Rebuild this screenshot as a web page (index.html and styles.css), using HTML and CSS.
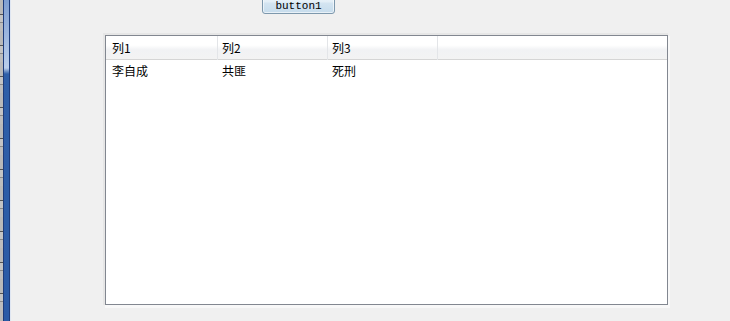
FILE: index.html
```html
<!DOCTYPE html>
<html lang="zh-CN">
<head>
    <meta charset="UTF-8">
    <title>Form1</title>
    <link rel="stylesheet" href="styles.css">
</head>
<body>
    <div class="page">
        <div class="strip">
            <div class="strip-edge"></div>
            <div class="strip-dark"></div>
            <div class="strip-bar"></div>
            <div class="strip-dark"></div>
            <div class="strip-light"></div>
        </div>
        <div class="content">
            <button class="btn">button1</button>
            <div class="listview">
                <div class="lv-header">
                    <div class="lv-col c1">列1</div>
                    <div class="lv-col c2">列2</div>
                    <div class="lv-col c3">列3</div>
                    <div class="lv-col filler"></div>
                </div>
                <div class="lv-row">
                    <div class="lv-cell c1">李自成</div>
                    <div class="lv-cell c2">共匪</div>
                    <div class="lv-cell c3">死刑</div>
                    <div class="lv-cell filler"></div>
                </div>
            </div>
        </div>
    </div>
</body>
</html>
```

FILE: styles.css
```css
body {
    margin: 0;
    background-color: #f0f0f0;
    font-family: "Noto Sans CJK SC", "Noto Sans", sans-serif;
    font-size: 12px;
    color: #000;
}
.page {
    display: flex;
    height: 321px;
    overflow: hidden;
}
.strip {
    display: flex;
    width: 12px;
    flex-shrink: 0;
}
.strip-edge {
    width: 3px;
    background: repeating-linear-gradient(to bottom, #b9b9b9 0 14px, #555 14px 15px, #c4c4c4 15px 22px, #8a8a8a 22px 23px, #bdbdbd 23px 31px);
}
.strip-dark {
    width: 1px;
    background-color: #1d3c7c;
}
.strip-bar {
    width: 5px;
    background: linear-gradient(to bottom, #7f9fd2 0, #b9cdea 68px, #2f5fa8 74px, #2a5aa6 100%);
}
.strip-light {
    width: 1px;
    background-color: #dfe6f2;
}
.content {
    display: flex;
    flex-direction: column;
    align-items: flex-start;
}
.btn {
    margin-top: -9px;
    margin-left: 250px;
    width: 73px;
    height: 23px;
    padding: 7px 0 0;
    border: 1px solid #7d98ad;
    border-radius: 3px;
    background: linear-gradient(to bottom, #f2f8fc 0, #e4eff7 45%, #d3e4f1 55%, #c6dcec 100%);
    box-shadow: inset 0 0 0 1px rgba(255, 255, 255, 0.6);
    font-family: "Liberation Mono", monospace;
    font-size: 11px;
    line-height: 12px;
    color: #000;
}
.listview {
    margin-top: 21px;
    margin-left: 93px;
    width: 561px;
    height: 268px;
    border: 1px solid #828790;
    background-color: #fff;
    box-shadow: 1px 2px 0 1px #f8f8f8, -1px -1px 0 1px #e6e6e6;
}
.lv-header, .lv-row {
    display: grid;
    grid-template-columns: 112px 110px 110px 1fr;
}
.lv-header {
    height: 23px;
    border-bottom: 1px solid #d5d5d5;
    background: linear-gradient(to bottom, #ffffff 0, #ffffff 40%, #f1f2f4 60%, #f3f3f3 100%);
}
.lv-col {
    border-right: 1px solid #e3e5e8;
    line-height: 24px;
    white-space: nowrap;
}
.lv-col.filler {
    border-right: 0;
}
.lv-cell {
    line-height: 21px;
    white-space: nowrap;
}
.c1 {
    padding-left: 6px;
}
.c2, .c3 {
    padding-left: 4px;
}
```
